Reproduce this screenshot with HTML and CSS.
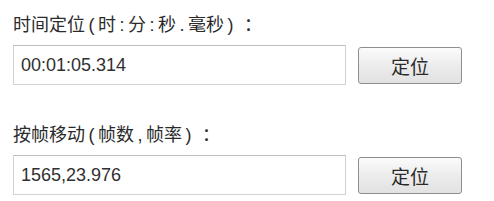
FILE: index.html
```html
<!DOCTYPE html>
<html lang="zh-CN">
<head>
    <meta charset="UTF-8">
    <title>定位</title>
    <link rel="stylesheet" href="styles.css">
</head>
<body>
    <div class="panel">
        <div class="field">
            <label class="field-label">时间定位<span class="p">(</span>时<span class="p">:</span>分<span class="p">:</span>秒<span class="p">.</span>毫秒<span class="p">)</span><span class="colon">：</span></label>
            <div class="field-row">
                <input class="field-input" type="text" value="00:01:05.314">
                <button class="locate-btn">定位</button>
            </div>
        </div>
        <div class="field">
            <label class="field-label">按帧移动<span class="p">(</span>帧数<span class="p">,</span>帧率<span class="p">)</span><span class="colon">：</span></label>
            <div class="field-row">
                <input class="field-input" type="text" value="1565,23.976">
                <button class="locate-btn">定位</button>
            </div>
        </div>
    </div>
</body>
</html>
```

FILE: styles.css
```css
* {
    margin: 0;
    padding: 0;
    box-sizing: border-box;
}

body {
    background: #fff;
    font-family: "Liberation Sans", "Noto Sans CJK SC", sans-serif;
    color: #2a2a2a;
}

.panel {
    display: flex;
    flex-direction: column;
    gap: 38px;
    padding: 13px 0 0 13px;
}

.field {
    display: flex;
    flex-direction: column;
    gap: 8px;
}

.field-label {
    font-size: 18px;
    line-height: 24px;
    height: 24px;
    color: #2b2b2b;
}

/* half-width punctuation in the label is wider than Liberation's */
.field-label .p {
    padding: 0 3.5px;
}

.field-label .colon {
    padding-left: 7px;
}

.field-row {
    display: flex;
    align-items: center;
    gap: 12px;
}

.field-input {
    width: 333px;
    height: 40px;
    border: 1px solid #d2d2d2;
    border-top-color: #bdbdbd;
    padding: 0 7px;
    font-family: "Liberation Sans", sans-serif;
    font-size: 18px;
    color: #303030;
    outline: none;
    background: #fff;
}

.locate-btn {
    width: 104px;
    height: 37px;
    border: 1px solid #8e8e8e;
    border-radius: 3px;
    background: linear-gradient(#fbfbfb, #ececec 50%, #e2e2e2);
    font-family: "Noto Sans CJK SC", sans-serif;
    font-size: 19px;
    color: #2a2a2a;
    cursor: pointer;
}
```
